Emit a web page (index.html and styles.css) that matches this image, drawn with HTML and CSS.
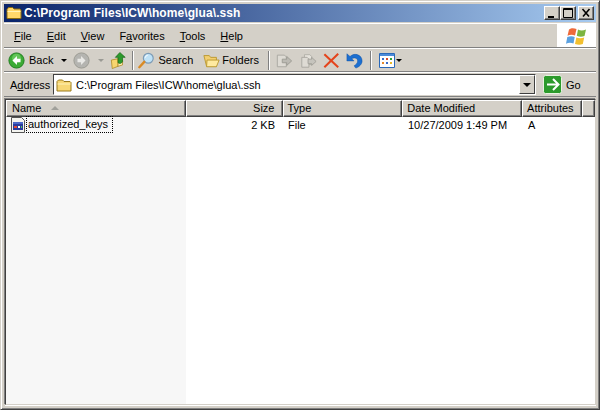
FILE: index.html
```html
<!DOCTYPE html>
<html lang="en">
<head>
<meta charset="utf-8">
<title>C:\Program Files\ICW\home\glua\.ssh</title>
<link rel="stylesheet" href="styles.css">
</head>
<body>
<div class="window">
  <header class="titlebar">
    <svg class="ico16" viewBox="0 0 16 16"><path d="M1 4.500 2.500 2.500h4L8 4h6l1 1v8.500H1z" fill="#ffd76a" stroke="#8a6a10"/><path d="M1.500 6.500h13" stroke="#fff3b8"/></svg>
    <span class="title-text">C:\Program Files\ICW\home\glua\.ssh</span>
    <div class="caption">
      <button class="cap-btn"><svg viewBox="0 0 14 12"><path d="M3 9h6v2H3z" fill="#000"/></svg></button>
      <button class="cap-btn"><svg viewBox="0 0 14 12"><path d="M2.500 1.500h9v9h-9zM2 2.500h10" fill="none" stroke="#000"/></svg></button>
      <button class="cap-btn cap-close"><svg viewBox="0 0 14 12"><path d="M3.500 2 10 9.500M10.500 2 4 9.500" fill="none" stroke="#000" stroke-width="1.600"/></svg></button>
    </div>
  </header>

  <div class="band menu-band">
    <nav class="menu">
      <span><u>F</u>ile</span><span><u>E</u>dit</span><span><u>V</u>iew</span><span>F<u>a</u>vorites</span><span><u>T</u>ools</span><span><u>H</u>elp</span>
    </nav>
    <div class="logo">
      <svg viewBox="0 0 22 20" width="22" height="20">
        <path d="M3 3.500C5.500 1.500 8 2 10.500 3L9 9.500C6.500 8.500 4 8.500 1.500 9.800z" fill="#ee6a3a"/>
        <path d="M12 3.500C14.500 4.800 17 4.600 20 3.500L18.500 10C16 11 13.500 11 10.800 9.800z" fill="#7cb540"/>
        <path d="M1.300 11C4 10 6.500 10 8.700 11L7.500 17.500C5 16.500 2.500 16.500 0 17.800z" fill="#5aa0e0"/>
        <path d="M10.300 11.500C13 12.500 15.500 12.500 18.200 11.500L16.800 18C14.500 19 12 19 9 18z" fill="#f3c030"/>
      </svg>
    </div>
  </div>

  <div class="band toolbar">
    <div class="tool">
      <svg class="ico19" viewBox="0 0 19 19"><circle cx="9.500" cy="9.500" r="8.500" fill="#3cab35" stroke="#1c7a1c"/><circle cx="9.500" cy="7" r="5" fill="#7fd96f" opacity=".6"/><path d="M10 4.500 5 9.500l5 5v-3h4v-4h-4z" fill="#fff"/></svg>
      <span class="tool-label">Back</span><i class="drop"></i>
    </div>
    <div class="tool tool-forward">
      <svg class="ico19" viewBox="0 0 19 19"><circle cx="9.500" cy="9.500" r="8.500" fill="#b4b4b0" stroke="#98988f"/><path d="M9 4.500l5 5-5 5v-3H5v-4h4z" fill="#e9e9e6"/></svg>
      <i class="drop drop-dim"></i>
    </div>
    <div class="tool tool-up">
      <svg class="ico19" viewBox="0 0 19 19"><path d="M1.500 9 9 7.500V16l-6.500 2.500z" fill="#f7d56e" stroke="#a8821c" stroke-width=".8"/><path d="M9 16l5-1.500V9L9 7.500z" fill="#fff0b0" stroke="#a8821c" stroke-width=".8"/><path d="M11 .5 6 6h3v6c2 1.500 3.500 1 5-1V6h3z" fill="#2c9a2c" stroke="#126012" stroke-width=".7"/></svg>
    </div>
    <div class="sep"></div>
    <div class="tool tool-search">
      <svg class="ico19" viewBox="0 0 19 19"><circle cx="11.500" cy="7" r="5.500" fill="#bfe2f7" stroke="#7d9bb5" stroke-width="1.300"/><path d="M11 3.500a3.500 3.500 0 0 0-3 3" stroke="#fff" fill="none"/><path d="M7 11 1.500 17" stroke="#d98a24" stroke-width="2.600" stroke-linecap="round"/></svg>
      <span class="tool-label label-search">Search</span>
    </div>
    <div class="tool tool-folders">
      <svg class="ico19" viewBox="0 0 19 19"><path d="M1 4h6l1.500 2H15v10H4z" fill="#f3cf70" stroke="#b8962c"/><path d="M4.500 9H18l-3 7.500H4z" fill="#ffeaa0" stroke="#b8962c"/></svg>
      <span class="tool-label label-folders">Folders</span>
    </div>
    <div class="sep sep-folders"></div>
    <div class="tool tool-move">
      <svg class="ico19" viewBox="0 0 19 19"><path d="M1.500 3.500h8l2 2v11h-10z" fill="#dedbd4" stroke="#a8a69f"/><path d="M7 8h5V5l5.500 5-5.500 5v-3H7z" fill="#bcbab3" stroke="#9c9a93"/></svg>
    </div>
    <div class="tool tool-copy">
      <svg class="ico19" viewBox="0 0 19 19"><path d="M5 3h6l2 2v9H5z" fill="#e6e3dc" stroke="#b0aea7"/><path d="M2 6h6l2 2v9H2z" fill="#dedbd4" stroke="#a8a69f"/><path d="M9 8h4V6l5 4.500-5 4.500v-2H9z" fill="#c6c4bd" stroke="#a2a099"/></svg>
    </div>
    <div class="tool tool-delete">
      <svg class="ico19" viewBox="0 0 19 19"><path d="M1.500 2.500 17 17M17 2 1.500 17" stroke="#e4441c" stroke-width="2.300" fill="none"/></svg>
    </div>
    <div class="tool tool-undo">
      <svg class="ico19" viewBox="0 0 19 19"><path d="M1 2v8h8L6.500 7.500c3-2 6.500-.5 6.500 2.500 0 2.500-2 4-4 5.500l2 2.500c4-1.500 7-4.500 7-8C18 3.500 10 0 4.500 5z" fill="#1c6fd0" stroke="#0f4fa0" stroke-width=".5"/></svg>
    </div>
    <div class="sep sep-views"></div>
    <div class="tool tool-views">
      <svg viewBox="0 0 16 15" width="16" height="15"><path d="M.500.500h15v14H.500z" fill="#fff" stroke="#2a68b8"/><path d="M1 1h14v2H1z" fill="#4a8ad8"/><path d="M3 5h2v2H3z" fill="#3a6cc8"/><path d="M7 5h2v2H7z" fill="#d84a2a"/><path d="M11 5h2v2h-2z" fill="#2aa03a"/><path d="M3 9h2v2H3z" fill="#e88a2a"/><path d="M7 9h2v2H7z" fill="#3a6cc8"/><path d="M11 9h2v2h-2z" fill="#e8b82a"/></svg>
      <i class="drop drop-views"></i>
    </div>
  </div>

  <div class="band address">
    <span class="addr-label">A<u>d</u>dress</span>
    <div class="addr-box">
      <svg class="ico16 addr-folder" viewBox="0 0 16 16"><path d="M1 4.500 2.500 3h4L8 4.500h6l1 1V14H1z" fill="#f7d774" stroke="#9a7a1c"/><path d="M1.500 7h13" stroke="#fff3b8"/></svg>
      <span class="addr-text">C:\Program Files\ICW\home\glua\.ssh</span>
      <span class="combo-btn"><i class="combo-arrow"></i></span>
    </div>
    <div class="go">
      <svg viewBox="0 0 19 19" width="19" height="19"><rect x=".500" y=".500" width="18" height="18" rx="2" fill="#2c9a2c" stroke="#e8f2e0"/><path d="M10 4l5.500 5.500L10 15M4 9.500h11" fill="none" stroke="#fff" stroke-width="2"/></svg>
      <span>Go</span>
    </div>
  </div>

  <div class="list">
    <div class="list-head">
      <div class="col col-name">Name<i class="sort"></i></div>
      <div class="col col-size">Size</div>
      <div class="col col-type">Type</div>
      <div class="col col-date">Date Modified</div>
      <div class="col col-attr">Attributes</div>
      <div class="col col-fill"></div>
    </div>
    <div class="list-body">
      <div class="side-shade"></div>
      <div class="row">
        <div class="cell-name">
          <svg class="ico16" viewBox="0 0 16 16"><path d="M1.500 .500h10l3 3v12h-13z" fill="#f4f4f0" stroke="#555"/><path d="M3 5h10v8H3z" fill="#2a3c9c"/><path d="M3 5h10v2H3z" fill="#4a68c8"/><path d="M4 9h3v2H4z" fill="#e04a3a"/><path d="M8 9h2v2H8z" fill="#fff"/><path d="M11 9h1v2h-1z" fill="#5cc85c"/></svg>
          <span class="focus-name">authorized_keys</span>
        </div>
        <div class="cell-size">2 KB</div>
        <div class="cell-type">File</div>
        <div class="cell-date">10/27/2009 1:49 PM</div>
        <div class="cell-attr">A</div>
      </div>
    </div>
  </div>
</div>
</body>
</html>
```

FILE: styles.css
```css
* { box-sizing: border-box; }
html, body { margin: 0; padding: 0; }
body { width: 600px; height: 410px; overflow: hidden; background: #d4d0c8; font-family: "Liberation Sans", Arial, sans-serif; font-size: 11px; color: #000; }
svg { display: block; flex: none; }
.window {
  width: 600px; height: 410px; display: flex; flex-direction: column;
  padding: 3px;
  border: 1px solid; border-color: #d4d0c8 #404040 #404040 #d4d0c8;
  box-shadow: inset 1px 1px 0 #fff, inset -1px -1px 0 #808080;
  background: #d4d0c8;
}
.titlebar {
  height: 18px; flex: none; display: flex; align-items: center; padding: 0 2px; gap: 2px;
  background: linear-gradient(90deg, #0a246a 0%, #a6caf0 100%);
  color: #fff; font-weight: bold; font-size: 12px;
}
.title-text { flex: 1; white-space: nowrap; letter-spacing: .09px; }
.caption { display: flex; }
.cap-btn {
  width: 16px; height: 14px; padding: 0; margin: 0; background: #d4d0c8;
  border: 1px solid; border-color: #fff #404040 #404040 #fff;
  box-shadow: inset -1px -1px 0 #808080; display: flex; align-items: center; justify-content: center;
}
.cap-btn svg { width: 14px; height: 12px; }
.cap-close { margin-left: 2px; }
.band { flex: none; display: flex; align-items: center; border-top: 1px solid #fff; border-bottom: 1px solid #808080; }
.menu-band { height: 25px; margin-top: 1px; align-items: stretch; }
.menu { flex: 1; display: flex; align-items: center; gap: 15px; padding-left: 10px; }
.logo { width: 39px; background: #fff; display: flex; align-items: center; justify-content: center; }
.toolbar { height: 24px; padding-left: 4px; }
.tool { display: flex; align-items: center; }
.ico19 { width: 17px; height: 17px; }
.ico16 { width: 16px; height: 16px; }
.tool-label { margin-left: 4px; }
.label-search { margin-left: 3px; }
.label-folders { margin-left: 2px; }
.drop { display: block; width: 0; height: 0; border: 3px solid transparent; border-top: 3px solid #000; border-bottom: 0; margin-left: 8px; }
.drop-dim { border-top-color: #9a9a94; margin-left: 8px; }
.tool-forward { margin-left: 6px; }
.tool-up { margin-left: 6px; }
.sep { width: 1px; height: 19px; background: #808080; box-shadow: 1px 0 0 #fff; margin: 0 5px; }
.tool-folders { margin-left: 10px; }
.sep-folders { margin-left: 9px; margin-right: 7px; }
.tool-copy { margin-left: 7px; }
.tool-delete { margin-left: 6px; }
.tool-undo { margin-left: 6px; }
.sep-views { margin-left: 7px; margin-right: 8px; }
.drop-views { margin-left: 1px; }
.address { height: 25px; padding-left: 6px; }
.addr-label { width: 43px; }
.addr-box {
  width: 483px; height: 21px; display: flex; align-items: center; background: #fff;
  border: 1px solid; border-color: #404040 #fff #fff #404040; padding-left: 2px;
}
.addr-folder { margin-right: 4px; }
.addr-text { flex: 1; white-space: nowrap; }
.combo-btn { width: 16px; height: 19px; background: #d4d0c8; border: 1px solid; border-color: #fff #404040 #404040 #fff; display: flex; align-items: center; justify-content: center; }
.combo-arrow { display: block; width: 0; height: 0; border: 4px solid transparent; border-top: 4px solid #000; border-bottom: 0; }
.go { display: flex; align-items: center; gap: 4px; margin-left: 7px; }
.list { flex: 1; min-height: 0; margin: 2px 0 1px 1px; display: flex; flex-direction: column; background: #fff; border: 1px solid; border-color: #404040 #d4d0c8 #d4d0c8 #404040; box-shadow: -1px -1px 0 #808080, 0 1px 0 #fff; }
.list-head { height: 17px; flex: none; display: flex; background: #d4d0c8; }
.col { height: 17px; display: flex; align-items: center; padding: 0 7px 1px 4px; border: 1px solid; border-color: #fff #404040 #404040 #fff; box-shadow: inset -1px -1px 0 #808080; white-space: nowrap; }
.col-name { width: 180px; padding-left: 5px; }
.col-size { width: 97px; justify-content: flex-end; }
.col-type { width: 120px; }
.col-date { width: 120px; }
.col-attr { width: 60px; }
.col-fill { flex: 1; }
.sort { display: block; width: 0; height: 0; border: 4px solid transparent; border-bottom: 4px solid #a0a09a; border-top: 0; margin-left: 10px; }
.list-body { flex: 1; position: relative; min-height: 0; }
.side-shade { position: absolute; left: 0; top: 0; bottom: 0; width: 180px; background: #f7f7f7; }
.row { position: relative; display: flex; height: 15px; align-items: center; white-space: nowrap; }
.cell-name { width: 180px; display: flex; align-items: center; padding-left: 4px; height: 15px; }
.focus-name { outline: 1px dotted #000; outline-offset: -1px; padding: 1px 5px 1px 2px; line-height: 15px; }
.cell-size { width: 97px; text-align: right; padding-right: 8px; }
.cell-type { width: 120px; padding-left: 5px; }
.cell-date { width: 120px; padding-left: 5px; }
.cell-attr { width: 60px; padding-left: 5px; }
```
